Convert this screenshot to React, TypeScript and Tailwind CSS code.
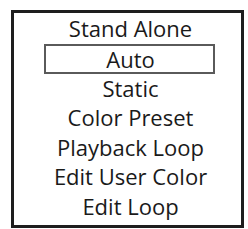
export default function App() {
  const items = ["Stand Alone", "Auto", "Static", "Color Preset", "Playback Loop", "Edit User Color", "Edit Loop"];
  const selected = "Auto";

  return (
    <div className="w-[248px] h-[229px] bg-white pt-[10px] pl-[11px]">
      <div
        className="w-[233px] h-[218px] border-[3px] border-[#1e1e1e] flex flex-col items-center pt-[1px] pl-[6px] text-[22px] leading-[29.5px] text-[#1a1a1a]"
        style={{ fontFamily: '"Open Sans", "Noto Sans", sans-serif' }}
      >
        {items.map((item) =>
          item === selected ? (
            <div key={item} className="w-[171px] h-[30px] ml-[-3px] border-2 border-[#5a5a5a] flex items-center justify-center">
              <span className="leading-[26px] ml-[3px]">{item}</span>
            </div>
          ) : (
            <div key={item}>{item}</div>
          )
        )}
      </div>
    </div>
  );
}
